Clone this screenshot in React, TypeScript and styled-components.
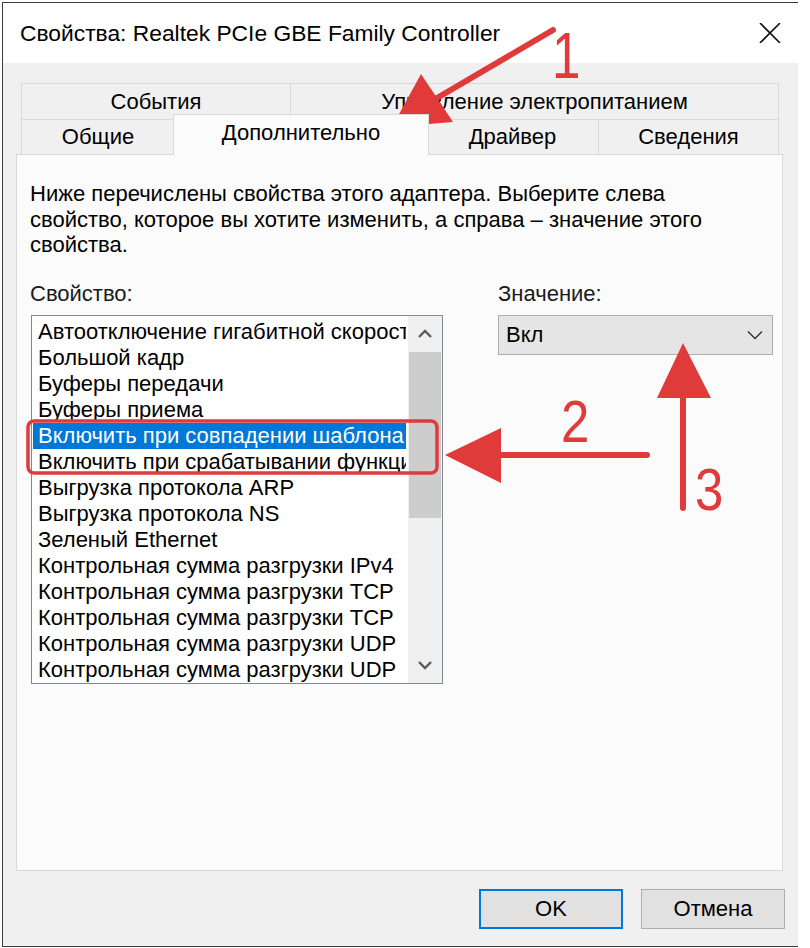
import styled, { createGlobalStyle } from 'styled-components';

const GlobalStyle = createGlobalStyle`
  html, body {
    margin: 0;
    padding: 0;
    background: #ffffff;
  }
  body {
    font-family: "Liberation Sans", Arial, sans-serif;
    color: #000;
  }
`;

const Stage = styled.div`
  position: relative;
  width: 810px;
  height: 948px;
  overflow: hidden;
  background: #ffffff;
`;

const Window = styled.div`
  margin: 2px 0 0 2px;
  width: 796px;
  height: 945px;
  box-sizing: border-box;
  border: 1px solid #3c3c3c;
  border-right: none;
  display: flex;
  flex-direction: column;
  background: #f0f0f0;
`;

const TitleBar = styled.div`
  height: 60px;
  flex: none;
  background: #ffffff;
  display: flex;
  align-items: center;
  justify-content: space-between;
  padding: 0 17px;
  font-size: 22.8px;
`;

const Body = styled.div`
  flex: 1;
  display: flex;
  flex-direction: column;
  padding: 20px 15px 17px 13px;
  font-size: 22px;
`;

const TabStrip = styled.div`
  margin: 0 4px 0 5px;
  display: flex;
  flex-direction: column;
`;

const TabRow = styled.div<{ $height: number }>`
  display: flex;
  height: ${(p) => p.$height}px;
  align-items: flex-end;
`;

const Tab = styled.div<{ $width: number; $active?: boolean }>`
  box-sizing: border-box;
  width: ${(p) => p.$width}px;
  height: 100%;
  display: flex;
  align-items: center;
  justify-content: center;
  border: 1px solid #d9d9d9;
  border-bottom: none;
  margin-left: -1px;
  background: #f0f0f0;
  &:first-child {
    margin-left: 0;
  }
  ${(p) =>
    p.$active &&
    `
    position: relative;
    z-index: 2;
    height: calc(100% + 6px);
    margin: 0 -2px -1px -2px;
    width: ${p.$width + 3}px;
    background: #fbfbfb;
    padding-bottom: 4px;
  `}
`;

const Panel = styled.div`
  height: 717px;
  box-sizing: border-box;
  border: 1px solid #d9d9d9;
  background: #fbfbfb;
  padding: 26px 0 0 13px;
`;

const Intro = styled.p`
  margin: 0;
  line-height: 25.5px;
  white-space: nowrap;
`;

const Columns = styled.div`
  display: flex;
  gap: 55px;
  margin-top: 23px;
`;

const Column = styled.div<{ $width: number }>`
  width: ${(p) => p.$width}px;
  flex: none;
  display: flex;
  flex-direction: column;
`;

const Label = styled.div`
  line-height: 25px;
  margin-bottom: 9px;
  color: #1a1a1a;
`;

const ListBox = styled.div`
  margin-left: 1px;
  height: 369px;
  box-sizing: border-box;
  border: 1px solid #828790;
  background: #ffffff;
  display: flex;
`;

const Items = styled.div`
  flex: 1;
  min-width: 0;
  padding: 3px 2px 0 1px;
  overflow: hidden;
`;

const Item = styled.div<{ $selected?: boolean }>`
  height: 26px;
  line-height: 26px;
  padding-left: 5px;
  white-space: nowrap;
  overflow: hidden;
  background: ${(p) => (p.$selected ? '#0078d7' : 'transparent')};
  color: ${(p) => (p.$selected ? '#ffffff' : '#000000')};
`;

const ScrollBar = styled.div`
  width: 34px;
  flex: none;
  background: #f0f0f0;
  display: flex;
  flex-direction: column;
`;

const ScrollButton = styled.div`
  height: 36px;
  flex: none;
  display: flex;
  align-items: center;
  justify-content: center;
`;

const ScrollTrack = styled.div`
  flex: 1;
  display: flex;
  flex-direction: column;
`;

const Thumb = styled.div`
  height: 166px;
  margin: 0 1px;
  background: #cdcdcd;
`;

const Select = styled.div`
  height: 40px;
  box-sizing: border-box;
  border: 1px solid #adadad;
  background: #e5e5e5;
  display: flex;
  align-items: center;
  justify-content: space-between;
  padding: 0 9px 0 7px;
`;

const ButtonRow = styled.div`
  display: flex;
  justify-content: flex-end;
  gap: 18px;
  margin: 18px -2px 0 0;
`;

const Button = styled.div<{ $primary?: boolean }>`
  width: 144px;
  height: 40px;
  box-sizing: border-box;
  display: flex;
  align-items: center;
  justify-content: center;
  background: #e1e1e1;
  border: ${(p) => (p.$primary ? '2px solid #0078d7' : '1px solid #adadad')};
`;

const Overlay = styled.svg`
  position: absolute;
  left: 0;
  top: 0;
  pointer-events: none;
`;

const items = [
  'Автоотключение гигабитной скорости',
  'Большой кадр',
  'Буферы передачи',
  'Буферы приема',
  'Включить при совпадении шаблона',
  'Включить при срабатывании функции',
  'Выгрузка протокола ARP',
  'Выгрузка протокола NS',
  'Зеленый Ethernet',
  'Контрольная сумма разгрузки IPv4',
  'Контрольная сумма разгрузки TCP',
  'Контрольная сумма разгрузки TCP',
  'Контрольная сумма разгрузки UDP',
  'Контрольная сумма разгрузки UDP',
];

const RED = '#e03a3a';

const Chevron = ({ up }: { up?: boolean }) => (
  <svg width="16" height="10" viewBox="0 0 16 10">
    <path
      d={up ? 'M2 8 L8 2 L14 8' : 'M2 2 L8 8 L14 2'}
      fill="none"
      stroke="#5a5a5a"
      strokeWidth="2.4"
    />
  </svg>
);

const App = () => {
  return (
    <Stage>
      <GlobalStyle />
      <Window>
        <TitleBar>
          <span>Свойства: Realtek PCIe GBE Family Controller</span>
          <svg width="22" height="20" viewBox="0 0 22 20">
            <path d="M1 0 L21 20 M21 0 L1 20" stroke="#111" strokeWidth="1.6" />
          </svg>
        </TitleBar>
        <Body>
          <TabStrip>
            <TabRow $height={36}>
              <Tab $width={270}>События</Tab>
              <Tab $width={489}>Управление электропитанием</Tab>
            </TabRow>
            <TabRow $height={35}>
              <Tab $width={154}>Общие</Tab>
              <Tab $width={253} $active>
                Дополнительно
              </Tab>
              <Tab $width={173}>Драйвер</Tab>
              <Tab $width={181}>Сведения</Tab>
            </TabRow>
          </TabStrip>
          <Panel>
            <Intro>
              Ниже перечислены свойства этого адаптера. Выберите слева
              <br />
              свойство, которое вы хотите изменить, а справа – значение этого
              <br />
              свойства.
            </Intro>
            <Columns>
              <Column $width={413}>
                <Label>Свойство:</Label>
                <ListBox>
                  <Items>
                    {items.map((name, i) => (
                      <Item key={i} $selected={i === 4}>
                        {name}
                      </Item>
                    ))}
                  </Items>
                  <ScrollBar>
                    <ScrollButton>
                      <Chevron up />
                    </ScrollButton>
                    <ScrollTrack>
                      <Thumb />
                    </ScrollTrack>
                    <ScrollButton>
                      <Chevron />
                    </ScrollButton>
                  </ScrollBar>
                </ListBox>
              </Column>
              <Column $width={275}>
                <Label>Значение:</Label>
                <Select>
                  <span>Вкл</span>
                  <svg width="16" height="10" viewBox="0 0 16 10">
                    <path d="M1 1.5 L8 8.5 L15 1.5" fill="none" stroke="#333" strokeWidth="1.4" />
                  </svg>
                </Select>
              </Column>
            </Columns>
          </Panel>
          <ButtonRow>
            <Button $primary>OK</Button>
            <Button>Отмена</Button>
          </ButtonRow>
        </Body>
      </Window>

      <Overlay width="810" height="948" viewBox="0 0 810 948">
        {/* 1: arrow to the Advanced tab */}
        <line x1="553" y1="30" x2="437" y2="98" stroke={RED} strokeWidth="6" strokeLinecap="round" />
        <polygon points="392,127 421,74 453,122" fill={RED} />
        <text x="552" y="78" fontFamily="Liberation Sans, sans-serif" fontSize="64" fill={RED} transform="translate(552 0) scale(0.8 1) translate(-552 0)">
          1
        </text>

        {/* 2: highlighted rows */}
        <rect x="28" y="421" width="409" height="52" rx="6" fill="none" stroke={RED} strokeWidth="3.5" />
        <line x1="647" y1="455" x2="495" y2="455" stroke={RED} strokeWidth="6" strokeLinecap="round" />
        <polygon points="445,455 501,428 501,483" fill={RED} />
        <text x="561" y="442" fontFamily="Liberation Sans, sans-serif" fontSize="60" fill={RED} transform="translate(561 0) scale(0.85 1) translate(-561 0)">
          2
        </text>

        {/* 3: value drop-down */}
        <line x1="683" y1="508" x2="683" y2="392" stroke={RED} strokeWidth="6" strokeLinecap="round" />
        <polygon points="683,343 657,398 711,398" fill={RED} />
        <text x="695" y="510" fontFamily="Liberation Sans, sans-serif" fontSize="60" fill={RED} transform="translate(695 0) scale(0.85 1) translate(-695 0)">
          3
        </text>
      </Overlay>
    </Stage>
  );
};

export default App;
